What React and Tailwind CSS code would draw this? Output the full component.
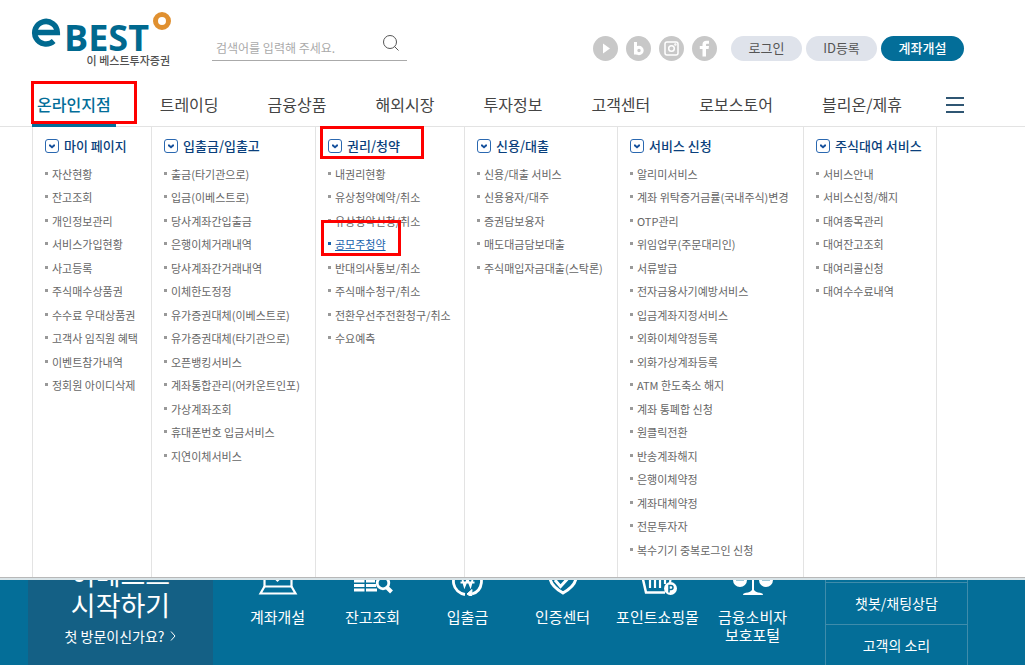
const socials = [
  {
    name: "YouTube",
    icon: <path d="M10 7.5v10l7-5z" fill="#fff" />,
  },
  {
    name: "Blog",
    icon: (
      <g fill="none" stroke="#fff" strokeWidth="3">
        <path d="M9.5 6v12.5" />
        <circle cx="13" cy="14.5" r="3.2" />
      </g>
    ),
  },
  {
    name: "Instagram",
    icon: (
      <g fill="none" stroke="#fff" strokeWidth="1.5">
        <rect x="6" y="6" width="13" height="13" rx="2" />
        <circle cx="12.5" cy="12.5" r="2.8" />
        <circle cx="16.4" cy="8.6" r="0.5" />
      </g>
    ),
  },
  {
    name: "Facebook",
    icon: (
      <path
        d="M10.500 20.500v-7.500H7.800V10h2.700V8.600C10.500 6 12 4.800 14.400 4.800h2.600v3h-1.800c-.9 0-1.200.4-1.200 1.200v1h3l-.4 3H14v7.500z"
        fill="#fff"
      />
    ),
  },
];

const navItems = [
  { label: "온라인지점", active: true },
  { label: "트레이딩" },
  { label: "금융상품" },
  { label: "해외시장" },
  { label: "투자정보" },
  { label: "고객센터" },
  { label: "로보스토어" },
  { label: "블리온/제휴" },
];

const columns = [
  {
    title: "마이 페이지",
    width: "w-[119px]",
    items: [
      "자산현황",
      "잔고조회",
      "개인정보관리",
      "서비스가입현황",
      "사고등록",
      "주식매수상품권",
      "수수료 우대상품권",
      "고객사 임직원 혜택",
      "이벤트참가내역",
      "정회원 아이디삭제",
    ],
  },
  {
    title: "입출금/입출고",
    width: "w-[164px]",
    items: [
      "출금(타기관으로)",
      "입금(이베스트로)",
      "당사계좌간입출금",
      "은행이체거래내역",
      "당사계좌간거래내역",
      "이체한도정정",
      "유가증권대체(이베스트로)",
      "유가증권대체(타기관으로)",
      "오픈뱅킹서비스",
      "계좌통합관리(어카운트인포)",
      "가상계좌조회",
      "휴대폰번호 입금서비스",
      "지연이체서비스",
    ],
  },
  {
    title: "권리/청약",
    width: "w-[149px]",
    marked: true,
    current: "공모주청약",
    items: [
      "내권리현황",
      "유상청약예약/취소",
      "유상청약신청/취소",
      "공모주청약",
      "반대의사통보/취소",
      "주식매수청구/취소",
      "전환우선주전환청구/취소",
      "수요예측",
    ],
  },
  {
    title: "신용/대출",
    width: "w-[153px]",
    items: [
      "신용/대출 서비스",
      "신용융자/대주",
      "증권담보융자",
      "매도대금담보대출",
      "주식매입자금대출(스탁론)",
    ],
  },
  {
    title: "서비스 신청",
    width: "w-[186px]",
    items: [
      "알리미서비스",
      "계좌 위탁증거금률(국내주식)변경",
      "OTP관리",
      "위임업무(주문대리인)",
      "서류발급",
      "전자금융사기예방서비스",
      "입금계좌지정서비스",
      "외화이체약정등록",
      "외화가상계좌등록",
      "ATM 한도축소 해지",
      "계좌 통폐합 신청",
      "원클릭전환",
      "반송계좌해지",
      "은행이체약정",
      "계좌대체약정",
      "전문투자자",
      "복수기기 중복로그인 신청",
    ],
  },
  {
    title: "주식대여 서비스",
    width: "w-[134px] border-r",
    items: [
      "서비스안내",
      "서비스신청/해지",
      "대여종목관리",
      "대여잔고조회",
      "대여리콜신청",
      "대여수수료내역",
    ],
  },
];

const quickLinks = [
  {
    label: "계좌개설",
    icon: (
      <g fill="none" stroke="#fff" strokeWidth="2.2">
        <path d="M6.500 30.500V8h27v22.500z" />
        <path d="M6.500 30.500L2.500 37.500h35L33.500 30.500" />
        <path d="M14 19l5.500 5.500L26 18" />
      </g>
    ),
  },
  {
    label: "잔고조회",
    icon: (
      <g fill="none" stroke="#fff">
        <path d="M1 25h10.500M13 25h9M1 29.500h10.500M13 29.500h10M1 34h10.500M13 34h11" strokeWidth="2.800" />
        <circle cx="30" cy="27" r="5.800" strokeWidth="2.800" />
        <path d="M33.500 31l5 5" strokeWidth="4" />
      </g>
    ),
  },
  {
    label: "입출금",
    icon: (
      <g fill="none" stroke="#fff">
        <path d="M17 38.500A13.200 13.200 0 0 1 12 14M24 38A13.200 13.200 0 0 0 27 14" strokeWidth="2.800" />
        <path d="M24 33.500l-5 4.500 4.500 3z" fill="#fff" strokeWidth="1" />
        <path d="M14 22l2.500 8.500L19.500 23l3 7.500L25 22M12.500 26.500h14" strokeWidth="1.800" />
      </g>
    ),
  },
  {
    label: "인증센터",
    icon: (
      <g fill="none" stroke="#fff" strokeWidth="3">
        <path d="M20 5l13 4v12c0 7-6 12-13 16C13 33 7 28 7 21V9z" />
        <path d="M12 24l5.500 6.500L28 19" />
      </g>
    ),
  },
  {
    label: "포인트쇼핑몰",
    icon: (
      <g fill="none" stroke="#fff" strokeWidth="2.5">
        <path d="M4 19l4 17.500h19M4 19h31" />
        <path d="M12 20v12M17 20v12M22 20v12M27 20v8M33 19l-1 8" strokeWidth="2.200" />
        <circle cx="32.500" cy="32.500" r="6.500" fill="#fff" stroke="none" />
        <path d="M31 36.500v-7h2a2 2 0 0 1 0 4h-2" stroke="#046e98" strokeWidth="1.500" />
      </g>
    ),
  },
  {
    label: "금융소비자 보호포털",
    icon: (
      <g fill="#fff">
        <path d="M0 22h14v2a7 7 0 0 1-14 0zM26 22h14v2a7 7 0 0 1-14 0z" />
        <path d="M3 24.500h8M29 24.500h8" stroke="#9cc8d8" />
        <path d="M19 8h2v28h-2z" />
        <path d="M10 39c0-2 2-2 5-2.500 2-.5 3-1.500 4-2.500h2c1 1 2 2 4 2.500 3 .5 5 .5 5 2.500z" />
      </g>
    ),
  },
];

const Logo = () => (
  <a href="#home" className="block w-[140px] shrink-0 pt-3 text-[#00698f]">
    <svg viewBox="0 0 140 40" className="h-10 w-[140px] overflow-visible" aria-label="eBEST">
      <path d="M3 20.500h22.300a11.300 11.300 0 1 0-3.600 8.500" fill="none" stroke="#00698f" strokeWidth="5.500" />
      <text x="32" y="39" fontFamily="Open Sans, sans-serif" fontWeight="700" fontSize="36" fill="#00698f">
        BEST
      </text>
      <circle cx="130" cy="9" r="6.500" fill="none" stroke="#e09030" strokeWidth="5" />
    </svg>
    <span className="block pr-0.5 text-right text-[11px] leading-4 font-medium text-[#505050]">
      이 베스트투자증권
    </span>
  </a>
);

const TitleIcon = () => (
  <svg viewBox="0 0 14 14" className="h-[14px] w-[14px] shrink-0">
    <rect x="0.5" y="0.5" width="13" height="13" rx="2.500" fill="#fff" stroke="#2a68b0" />
    <path d="M4 5.500h1.500L7 7l1.500-1.500H10V7L7 9.500 4 7z" fill="#15509c" />
  </svg>
);

const MenuColumn = ({ title, width, items, marked, current }) => (
  <section className={`${width} shrink-0 border-l border-[#e3e3e3] pt-[11px] pl-3`}>
    <h2 className="relative flex h-4 items-center gap-[5px] text-[13px] leading-4 font-medium whitespace-nowrap text-[#0a3f7c]">
      <TitleIcon />
      {title}
      {marked && <span className="absolute -top-3 -left-2 h-[33px] w-[104px] border-3 border-[#fe0000]" />}
    </h2>
    <ul className="mt-2">
      {items.map((item) => (
        <li key={item} className="relative flex h-[23px] items-center gap-1 whitespace-nowrap even:mb-px">
          <span className={`h-[3px] w-[3px] shrink-0 ${item === current ? "bg-[#1762ad]" : "bg-[#999]"}`} />
          <a
            href="#menu"
            className={`text-[11px] leading-4 ${item === current ? "text-[#1762ad] underline" : "text-[#666]"}`}
          >
            {item}
          </a>
          {item === current && (
            <span className="absolute -top-3 -left-[7px] h-[36px] w-[80px] border-3 border-[#fe0000]" />
          )}
        </li>
      ))}
    </ul>
  </section>
);

const App = () => {
  return (
    <div className="bg-white font-['Noto_Sans_CJK_KR',sans-serif]">
      <header className="border-b border-[#e3e3e3]">
        <div className="ml-8 flex h-[83px] max-w-[932px] items-start">
          <Logo />
          <form className="mt-[35px] ml-10 flex h-[26px] w-[195px] border-b border-[#aaa]">
            <input
              type="text"
              aria-label="검색어"
              placeholder="검색어를 입력해 주세요."
              className="min-w-0 flex-1 pl-1 text-[12px] outline-none placeholder:text-[#aaa]"
            />
            <button type="button" aria-label="검색" className="mr-2 h-4 w-4">
              <svg viewBox="0 0 16 16" className="h-4 w-4" fill="none" stroke="#555">
                <circle cx="7" cy="7" r="6.500" />
                <path d="M11.500 11.500l4 4" />
              </svg>
            </button>
          </form>
          <div className="mt-[35px] ml-auto flex items-center">
            <div className="mr-[14px] flex gap-2 pt-px">
              {socials.map((s) => (
                <a key={s.name} href="#sns" aria-label={s.name}>
                  <svg viewBox="0 0 25 25" className="h-[25px] w-[25px]">
                    <circle cx="12.500" cy="12.500" r="12.500" fill="#c8c8c8" />
                    {s.icon}
                  </svg>
                </a>
              ))}
            </div>
            <div className="flex gap-1 text-[13px] leading-4">
              <button className="h-[25px] w-[71px] rounded-full bg-[#dfe3eb] text-[#555]">로그인</button>
              <button className="h-[25px] w-[71px] rounded-full bg-[#dfe3eb] text-[#555]">ID등록</button>
              <button className="h-[25px] w-[83px] rounded-full bg-[#036e99] font-medium text-white">계좌개설</button>
            </div>
          </div>
        </div>

        <nav className="ml-8 flex h-[43px] max-w-[932px] items-center justify-between">
          {navItems.map((item) => (
            <a
              key={item.label}
              href="#nav"
              className={`relative flex h-full items-center px-[5px] pb-0.5 text-[16px] ${
                item.active ? "font-medium text-[#036e99]" : "text-[#444]"
              }`}
            >
              {item.label}
              {item.active && (
                <>
                  <span className="absolute inset-x-0 -bottom-px h-[3px] bg-[#036e99]" />
                  <span className="absolute -top-0.5 -left-px h-[43px] w-[106px] border-3 border-[#fe0000]" />
                </>
              )}
            </a>
          ))}
          <button aria-label="전체메뉴" className="flex w-[18px] flex-col gap-[5px]">
            <span className="h-[2px] bg-[#2f5673]" />
            <span className="h-[2px] bg-[#2f5673]" />
            <span className="h-[2px] bg-[#2f5673]" />
          </button>
        </nav>
      </header>

      <div className="flex min-h-[451px] border-b border-[#b8b8b8] pl-8">
        {columns.map((col) => (
          <MenuColumn key={col.title} {...col} />
        ))}
      </div>

      <main className="flex h-[87px] overflow-hidden border-t-2 border-[#d9e4e8] bg-[#046e98] pl-7 text-white">
        <a href="#start" className="block w-[185px] shrink-0 bg-[#146085] text-center">
          <strong className="-mt-[22px] block text-[27px] leading-[31px] font-normal">
            이베스트
            <br />
            시작하기
          </strong>
          <span className="mt-1 flex items-center justify-center gap-1.5 text-[14px] leading-6">
            첫 방문이신가요?
            <svg viewBox="0 0 6 10" className="h-[10px] w-[6px]" fill="none" stroke="#fff">
              <path d="M1 0.500L5 5 1 9.500" />
            </svg>
          </span>
        </a>
        <div className="ml-[17px] flex">
          {quickLinks.map((link) => (
            <a key={link.label} href="#quick" className="-mt-6 flex w-[95px] flex-col items-center">
              <svg viewBox="0 0 40 40" className="h-10 w-10">
                {link.icon}
              </svg>
              <span className="mt-3 px-1 text-center text-[15px] leading-[18px] break-keep">{link.label}</span>
            </a>
          ))}
        </div>
        <div className="ml-[25px] w-[143px] shrink-0 border-x border-[#3f8cab] pt-[2px] text-center text-[14px]">
          <a href="#chat" className="block h-[42px] border-t border-[#3f8cab] leading-[41px]">
            챗봇/채팅상담
          </a>
          <a href="#voice" className="block h-[42px] border-t border-[#3f8cab] leading-[41px]">
            고객의 소리
          </a>
        </div>
      </main>
    </div>
  );
};

export default App;
